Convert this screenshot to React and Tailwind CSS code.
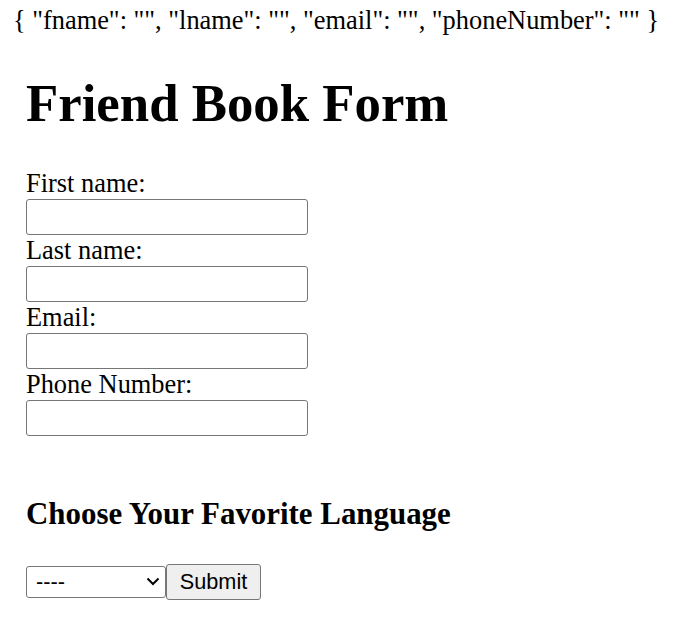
import { useState } from 'react';

const FIELDS = [
  { name: 'fname', label: 'First name:' },
  { name: 'lname', label: 'Last name:' },
  { name: 'email', label: 'Email:' },
  { name: 'phoneNumber', label: 'Phone Number:' },
];

export default function App() {
  const [form, setForm] = useState({ fname: '', lname: '', email: '', phoneNumber: '' });

  const onChange = (e) => setForm({ ...form, [e.target.name]: e.target.value });

  return (
    <div className="min-h-screen bg-white text-black font-['Liberation_Serif',_serif] text-[26.4px]">
      <div className="pt-[5px] pr-[9px] text-center leading-[30px] whitespace-nowrap">{JSON.stringify(form).replace(/^\{/, '{ ').replace(/\}$/, ' }').replace(/,/g, ', ').replace(/":"/g, '": "')}</div>

      <div className="pl-[26px]">
        <h1 className="mt-[38px] text-[52.8px] leading-[60px] font-bold">Friend Book Form</h1>

        <form className="mt-[35px] flex flex-col items-start" onSubmit={(e) => e.preventDefault()}>
          {FIELDS.map((f) => (
            <div key={f.name} className="flex flex-col items-start">
              <label htmlFor={f.name} className="leading-[31px]">{f.label}</label>
              <input
                id={f.name}
                name={f.name}
                value={form[f.name]}
                onChange={onChange}
                className="w-[282px] h-[36px] border border-[#767676] rounded-[3px] bg-white"
              />
            </div>
          ))}

          <h3 className="mt-[60px] text-[30.9px] leading-[35px] font-bold">Choose Your Favorite Language</h3>

          <div className="mt-[33px] flex items-center font-['Liberation_Sans',_Arial,_sans-serif] text-[21.7px]">
            <div className="relative">
              <select className="appearance-none w-[140px] h-[32px] border border-[#767676] rounded-[3px] bg-white pl-[9px] leading-[30px] text-black">
                <option>----</option>
                <option>JavaScript</option>
                <option>Python</option>
              </select>
              <svg className="absolute right-[6px] top-[11px] pointer-events-none" width="14" height="9" viewBox="0 0 14 9" fill="none">
                <path d="M1.5 1.5 L7 7 L12.5 1.5" stroke="#000" strokeWidth="2" />
              </svg>
            </div>
            <button type="submit" className="w-[95px] h-[36px] border border-[#767676] rounded-[3px] bg-[#efefef] leading-[30px] text-black">
              Submit
            </button>
          </div>
        </form>
      </div>
    </div>
  );
}
